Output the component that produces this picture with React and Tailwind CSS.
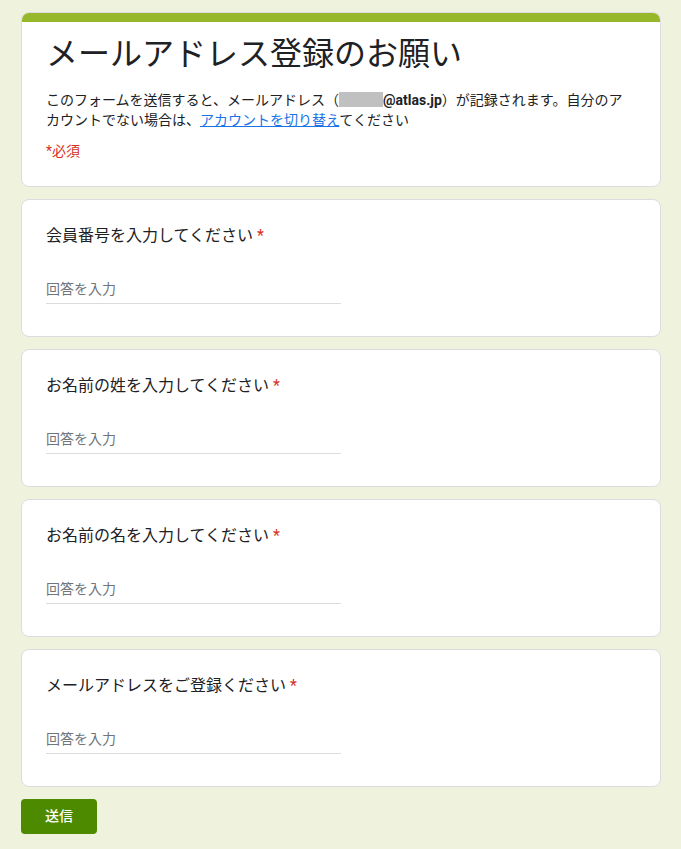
const font = { fontFamily: 'Roboto, "Noto Sans CJK JP", sans-serif' };

const questions = [
  "会員番号を入力してください",
  "お名前の姓を入力してください",
  "お名前の名を入力してください",
  "メールアドレスをご登録ください",
];

function Question({ label }) {
  return (
    <div className="bg-white border border-[#dadce0] rounded-lg px-6 pt-6 h-[138px]">
      <div className="text-[16px] leading-6 text-[#202124]">
        {label}
        <span className="text-[#d93025] ml-1">*</span>
      </div>
      <div className="mt-[25px] w-[295px] border-b border-[#dadce0] pt-[4px] pb-[2px]">
        <span className="text-[14px] leading-5 text-[#70757a]">回答を入力</span>
      </div>
    </div>
  );
}

export default function App() {
  return (
    <div className="min-h-[849px] bg-[#eff3dd] pt-3 px-[21px] pb-4" style={font}>
      <div className="w-[640px] flex flex-col gap-3">
        {/* Header card */}
        <div className="bg-white rounded-lg border border-[#dadce0] overflow-hidden">
          <div className="h-[10px] bg-[#97b82a] -mx-px -mt-px" />
          <div className="px-6 pt-3 pb-[25px]">
            <h1 className="text-[32px] leading-10 text-[#202124] font-normal">
              メールアドレス登録のお願い
            </h1>
            <p className="mt-4 text-[14px] leading-5 text-[#202124]">
              このフォームを送信すると、メールアドレス（
              <span className="inline-block w-[44px] h-[15px] bg-[#c0c0c0] align-[-2px]" />
              <span className="font-bold">@atlas.jp</span>）が記録されます。自分のア
              <br />
              カウントでない場合は、
              <a href="#" className="text-[#1a73e8] underline">
                アカウントを切り替え
              </a>
              てください
            </p>
            <div className="mt-[11px] text-[14px] leading-5 text-[#d93025]">*必須</div>
          </div>
        </div>

        {questions.map((q) => (
          <Question key={q} label={q} />
        ))}

        <div>
          <button className="w-[76px] h-[35px] rounded bg-[#4e8a00] text-white text-[14px] font-medium">
            送信
          </button>
        </div>
      </div>
    </div>
  );
}
